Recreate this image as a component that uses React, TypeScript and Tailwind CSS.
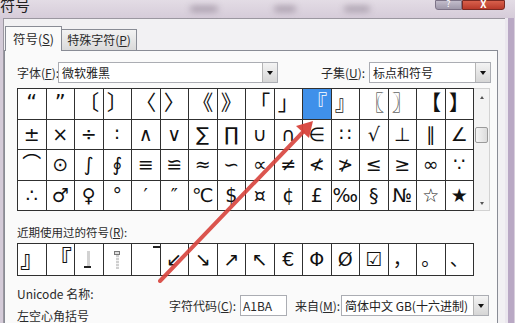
import React from "react";

const font = "font-['Noto_Sans_CJK_SC','Noto_Sans',sans-serif]";
const glyphFont = "font-['DejaVu_Sans','Noto_Sans_CJK_SC',sans-serif]";

const rows: string[][] = [
  ["“", "”", "〔", "〕", "〈", "〉", "《", "》", "「", "」", "『", "』", "〖", "〗", "【", "】"],
  ["±", "×", "÷", "∶", "∧", "∨", "∑", "∏", "∪", "∩", "∈", "∷", "√", "⊥", "∥", "∠"],
  ["⌒", "⊙", "∫", "∮", "≡", "≌", "≈", "∽", "∝", "≠", "≮", "≯", "≤", "≥", "∞", "∵"],
  ["∴", "♂", "♀", "°", "′", "″", "℃", "$", "¤", "¢", "£", "‰", "§", "№", "☆", "★"],
];

const recent = ["』", "『", "", "", "", "↙", "↘", "↗", "↖", "€", "Φ", "Ø", "☑", "，", "。", "、"];

function Arrow() {
  return (
    <div className="w-[15px] h-full flex-none flex items-center justify-center border-l border-[#b5b5b5] bg-gradient-to-b from-[#f4f4f4] to-[#d6d6d6]">
      <div className="w-0 h-0 border-x-[3.5px] border-x-transparent border-t-[4px] border-t-[#111]" />
    </div>
  );
}

function Combo({ w, text }: { w: string; text: string }) {
  return (
    <div className={`${w} h-[21px] flex-none flex border border-[#abadb3] bg-white`}>
      <div className="flex-1 pl-[3px] text-[12px] leading-[19px] text-[#222] whitespace-nowrap overflow-hidden">{text}</div>
      <Arrow />
    </div>
  );
}

// faint vertical-form brackets in the recent row
function RecentMark({ i }: { i: number }) {
  if (i === 2)
    return (
      <div className="flex flex-col items-center">
        <div className="w-[3px] h-[15px] bg-[#d2d2d2]" />
        <div className="w-[7px] h-[2px] -ml-[3px] bg-[#222]" />
      </div>
    );
  if (i === 3)
    return (
      <div className="flex flex-col items-center">
        <div className="w-[6px] h-[4px] border border-[#777] bg-[#ddd]" />
        <div className="w-[3px] h-[14px] bg-[repeating-linear-gradient(#cfcfcf_0_2px,#f2f2f2_2px_3px)]" />
      </div>
    );
  return <div className="self-start mt-[2px] ml-auto w-[7px] h-[2px] bg-[#222]" />;
}

export default function App() {
  return (
    <div className={`relative w-[515px] h-[323px] overflow-hidden bg-[#d4cbd8] ${font} text-[#2a2a2a]`}>
      {/* title bar */}
      <div className="h-[18px] flex items-start bg-gradient-to-b from-[#e3dce5] to-[#d6ccd9]">
        <div className="text-[15px] leading-[15px] -mt-[3px] text-[#222] whitespace-nowrap">符号</div>
        <div className="ml-[160px] mt-[6px] w-[28px] h-[6px] rounded-full bg-[#a89cab] blur-[3px]" />
        <div className="ml-[56px] mt-[6px] w-[22px] h-[6px] rounded-full bg-[#a89cab] blur-[3px]" />
        <div className="ml-[48px] mt-[6px] w-[26px] h-[6px] rounded-full bg-[#aa9fad] blur-[3px]" />
        <div className="ml-auto mr-[10px] flex h-[10px]">
          <div className="w-[27px] h-[10px] bg-gradient-to-b from-[#c2bccb] to-[#9f98aa] border border-[#7d7488] rounded-bl-[3px] text-[9px] leading-[6px] text-center text-white">?</div>
          <div className="w-[43px] h-[10px] bg-gradient-to-b from-[#d8604c] to-[#b8392a] border border-[#7a2a22] rounded-br-[3px] text-[10px] leading-[6px] text-center text-white font-bold">X</div>
        </div>
      </div>

      <div className="flex h-[305px]">
        <div className="ml-[3px] w-[502px] h-full flex-none bg-[#f2f1f3] border-t border-l border-[#9b97a0] pt-[7px]">
          {/* tabs */}
          <div className="flex items-end ml-[1px]">
            <div className="relative z-10 w-[57px] h-[25px] -mb-px bg-[#fafafa] border border-b-0 border-[#898c95] text-[12.5px] leading-[24px] text-center whitespace-nowrap">
              符号(<u>S</u>)
            </div>
            <div className="w-[75px] h-[21px] bg-gradient-to-b from-[#f3f3f3] to-[#dadada] border border-l-0 border-b-0 border-[#898c95] text-[12px] leading-[20px] text-center whitespace-nowrap">
              特殊字符(<u>P</u>)
            </div>
          </div>

          {/* panel */}
          <div className="w-[494px] h-[280px] bg-[#fafafa] border border-[#898c95] pl-[12px] pr-[6px] pt-[11px]">
            <div className="flex items-center justify-between">
              <div className="flex items-center">
                <div className="w-[41px] flex-none text-[12px] whitespace-nowrap">字体(<u>F</u>):</div>
                <Combo w="w-[220px]" text="微软雅黑" />
              </div>
              <div className="flex items-center">
                <div className="w-[48px] flex-none text-[12px] whitespace-nowrap">子集(<u>U</u>):</div>
                <Combo w="w-[122px]" text="标点和符号" />
              </div>
            </div>

            {/* symbol grid */}
            <div className="flex mt-[5px]">
              <div className={`grid grid-cols-[repeat(16,27.5px)] grid-rows-[repeat(4,29.5px)] gap-px p-px bg-[#303030] ${glyphFont}`}>
                {rows.flat().map((c, i) => (
                  <div
                    key={i}
                    className={`flex items-center justify-center overflow-hidden leading-none ${
                      i < 16 ? "text-[21px]" : "text-[19px]"
                    } ${i === 10 ? "bg-[#3f90ea] text-white" : "bg-white text-[#111]"}`}
                  >
                    {c}
                  </div>
                ))}
              </div>
              <div className="w-[16px] h-[123px] bg-[#f3f3f3] border-y border-r border-[#d2d2d2] flex flex-col items-center">
                <div className="mt-[7px] w-0 h-0 border-x-[2.5px] border-x-transparent border-b-[3px] border-b-[#555]" />
                <div className="mt-[28px] w-[13px] h-[16px] rounded-[2px] border border-[#9a9a9a] bg-gradient-to-r from-[#f6f6f6] to-[#dcdcdc]" />
                <div className="mt-auto mb-[5px] w-0 h-0 border-x-[2.5px] border-x-transparent border-t-[3px] border-t-[#555]" />
              </div>
            </div>

            <div className="mt-[13px] h-[16px] text-[11.5px] leading-[16px] whitespace-nowrap">近期使用过的符号(<u>R</u>):</div>

            <div className={`mt-[3px] grid w-fit grid-cols-[repeat(16,27.5px)] grid-rows-[31px] gap-px p-px bg-[#303030] ${glyphFont}`}>
              {recent.map((c, i) => (
                <div
                  key={i}
                  className={`flex items-center justify-center overflow-hidden bg-white leading-none text-[#111] ${
                    i < 2 ? "text-[23px] font-bold" : "text-[19px]"
                  }`}
                >
                  {i >= 2 && i <= 4 ? <RecentMark i={i} /> : c}
                </div>
              ))}
            </div>

            <div className="mt-[10px] flex items-start">
              <div className="w-[152px] flex-none flex flex-col gap-[6px] text-[12px] leading-[16px] whitespace-nowrap">
                <div>Unicode 名称:</div>
                <div>左空心角括号</div>
              </div>
              <div className="mt-[9px] flex items-center">
                <div className="w-[71px] flex-none text-[12px] whitespace-nowrap">字符代码(<u>C</u>):</div>
                <div className="w-[47px] h-[21px] flex-none border border-[#abadb3] bg-white pl-[2px] text-[12px] leading-[19px]">A1BA</div>
                <div className="ml-[8px] w-[46px] flex-none text-[12px] whitespace-nowrap">来自(<u>M</u>):</div>
                <Combo w="w-[148px]" text="简体中文 GB(十六进制)" />
              </div>
            </div>
          </div>
        </div>
        {/* right window frame */}
        <div className="flex-1 flex">
          <div className="w-[3px] bg-[#ebe7ee]" />
          <div className="w-[6px] bg-[#b9a8c4]" />
          <div className="flex-1 bg-[#d8cfdc]" />
        </div>
      </div>

      {/* red arrow overlay */}
      <svg className="absolute inset-0 pointer-events-none" width="515" height="323" viewBox="0 0 515 323">
        <line x1="160" y1="281" x2="303" y2="132" stroke="#d8433c" strokeWidth="4" strokeLinecap="round" opacity="0.9" />
        <polygon points="313,121 309,138 296,126" fill="#d8433c" opacity="0.95" />
      </svg>
    </div>
  );
}
